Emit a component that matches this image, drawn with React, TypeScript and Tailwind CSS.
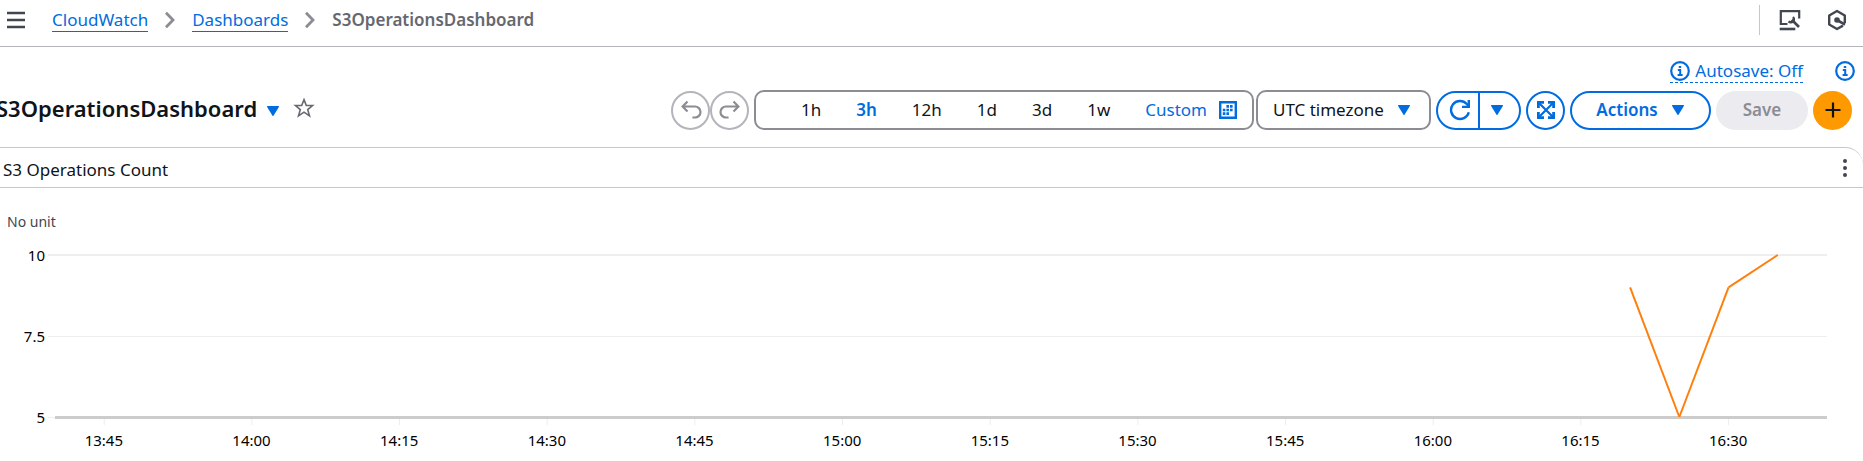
import React from "react";

const ranges = ["1h", "3h", "12h", "1d", "3d", "1w"];
const times = [
  "13:45", "14:00", "14:15", "14:30", "14:45", "15:00",
  "15:15", "15:30", "15:45", "16:00", "16:15", "16:30",
];

// Minutes after 13:40 and the operation count; the time axis spans 180 minutes.
const points = [
  { minute: 160, count: 9 },
  { minute: 165, count: 5 },
  { minute: 170, count: 9 },
  { minute: 175, count: 10 },
];

const plotHeight = 162;
const toX = (minute: number) => `${(minute / 180) * 100}%`;
const toY = (count: number) => 1 + ((10 - count) / 5) * plotHeight;

function Triangle({ className = "" }: { className?: string }) {
  return (
    <svg viewBox="0 0 14 12" className={`h-3 w-3.5 shrink-0 ${className}`} fill="currentColor" aria-hidden="true">
      <path d="M1.6 1h10.8a.6.6 0 0 1 .5.9l-5.4 8.8a.6.6 0 0 1-1 0L1.1 1.9a.6.6 0 0 1 .5-.9z" />
    </svg>
  );
}

function Chevron() {
  return (
    <svg viewBox="0 0 12 18" className="h-[18px] w-3 shrink-0" fill="none" stroke="#8c8c94" strokeWidth="2.8" aria-hidden="true">
      <path d="M2 1.8 9 9l-7 7.2" />
    </svg>
  );
}

function InfoIcon() {
  return (
    <svg viewBox="0 0 20 20" className="size-5 shrink-0" fill="none" stroke="currentColor" strokeWidth="2.2" aria-hidden="true">
      <circle cx="10" cy="10" r="8.8" />
      <path d="M7.8 9h2.4v5M7.6 14.1h5M8.8 6h2.4" strokeWidth="2" />
    </svg>
  );
}

function UndoIcon({ flip = false }: { flip?: boolean }) {
  return (
    <svg viewBox="0 0 22 22" className={flip ? "size-[22px] -scale-x-100" : "size-[22px]"} fill="none" stroke="#8c8c94" strokeWidth="2.2" aria-hidden="true">
      <path d="M7.5 2.5 2.6 7.5l4.9 5M2.8 7.5H15a5.4 5.4 0 0 1 0 11h-2.6" />
    </svg>
  );
}

const round = "flex size-[39px] shrink-0 items-center justify-center rounded-full";

export default function App() {
  return (
    <div className="w-full overflow-hidden bg-white font-['Noto_Sans','Open_Sans',sans-serif] text-[17px] leading-6 text-[#0f141a]">
      <header className="flex h-[47px] items-center border-b border-[#b4b4bb] pb-1.5 pl-[7px] pr-4">
        <button aria-label="Open navigation" className="text-[#424650]">
          <svg viewBox="0 0 18 18" className="size-[18px]" stroke="currentColor" strokeWidth="2.4" aria-hidden="true">
            <path d="M0 2h18M0 9h18M0 16h18" />
          </svg>
        </button>
        <nav aria-label="Breadcrumbs" className="ml-[27px] flex items-center gap-4">
          <a href="#cloudwatch" className="border-b border-[#006ce0] leading-[22px] text-[#006ce0]">CloudWatch</a>
          <Chevron />
          <a href="#dashboards" className="border-b border-[#006ce0] leading-[22px] text-[#006ce0]">Dashboards</a>
          <Chevron />
          <span className="font-semibold leading-[22px] text-[#656871]">S3OperationsDashboard</span>
        </nav>
        <div className="ml-auto flex items-center">
          <div className="h-[30px] w-px bg-[#c6c6cd]" />
          <button aria-label="Cloud shell tools" className="ml-[19px] text-[#424650]">
            <svg viewBox="0 0 22 22" className="size-[22px]" fill="none" stroke="currentColor" strokeWidth="2.2" aria-hidden="true">
              <path d="M8.5 15H1.8V2.2h18.4v7.3" />
              <path d="M.7 20h15.6" strokeWidth="2.6" />
              <path d="m13.5 11.5 6.5 6.5" strokeWidth="2.6" />
              <path d="M14 8a3.1 3.1 0 0 1-4.4 4.4" strokeWidth="2.4" />
              <path d="m12.8 10.8 1.6 1.6" strokeWidth="3" />
            </svg>
          </button>
          <button aria-label="Amazon Q" className="ml-[26px] text-[#424650]">
            <svg viewBox="0 0 20 22" className="h-[22px] w-5" fill="none" stroke="currentColor" strokeWidth="2.4" aria-hidden="true">
              <path d="M17.8 14V6.5L10 2 2.2 6.5v9L10 20l6-3.4" strokeLinejoin="round" />
              <circle cx="10" cy="11" r="2.8" fill="currentColor" stroke="none" />
              <path d="m10 11 8 4.6" strokeWidth="2.6" />
            </svg>
          </button>
        </div>
      </header>

      <main>
        <div className="flex h-[43px] items-end justify-end gap-8 pb-[7px] pr-2 text-[#006ce0]">
          <button className="flex items-center gap-[5px] border-b border-dashed border-[#006ce0] leading-[22px]">
            <InfoIcon />
            Autosave: Off
          </button>
          <button aria-label="Dashboard information" className="pb-0.5"><InfoIcon /></button>
        </div>

        <div className="flex items-center gap-[5px] pr-[11px]">
          <h1 className="-ml-1 pb-1 text-[22px] font-semibold leading-8">S3OperationsDashboard</h1>
          <button aria-label="Switch dashboard" className="ml-1 pt-0.5 text-[#006ce0]"><Triangle /></button>
          <button aria-label="Add to favorites" className="ml-2 pb-1">
            <svg viewBox="0 0 22 22" className="size-[22px]" fill="none" stroke="#656871" strokeWidth="1.6" aria-hidden="true">
              <path d="m11 2.6 2.3 5.9h6.2l-4.8 4.1 1.8 6.2-5.5-3.6-5.5 3.6 1.8-6.2-4.8-4.1h6.2z" />
            </svg>
          </button>

          <div className="ml-auto flex">
            <button aria-label="Undo" disabled className={`${round} border-2 border-[#b4b4bb]`}><UndoIcon /></button>
            <button aria-label="Redo" disabled className={`${round} border-2 border-[#b4b4bb]`}><UndoIcon flip /></button>
          </div>
          <div className="flex gap-0.5">
            <div className="flex h-10 items-center gap-[35px] rounded-[10px] border-2 border-[#8c8c94] pl-[45px] pr-[15px]">
              {ranges.map((range) => (
                <button key={range} className={range === "3h" ? "font-semibold text-[#006ce0]" : ""}>{range}</button>
              ))}
              <button className="flex items-center gap-3 text-[#006ce0]">
                Custom
                <svg viewBox="0 0 18 18" className="size-[18px]" aria-hidden="true">
                  <path d="M1.2 1.2h15.6v15.6H1.2z" fill="none" stroke="currentColor" strokeWidth="2.4" />
                  <path d="M7.4 5.4h7M3.8 9h10.6M3.8 12.6h6.6" stroke="currentColor" strokeWidth="2.6" strokeDasharray="2.6 1" />
                </svg>
              </button>
            </div>
            <div className="relative">
              <select aria-label="Timezone" className="h-10 w-[175px] appearance-none rounded-[10px] border-2 border-[#8c8c94] bg-white pl-[15px] pr-9">
                <option>UTC timezone</option>
              </select>
              <Triangle className="pointer-events-none absolute right-5 top-3.5 text-[#006ce0]" />
            </div>
          </div>
          <div className="flex h-[39px] w-[85px] rounded-full border-2 border-[#006ce0] text-[#006ce0]">
            <button aria-label="Refresh" className="flex w-[42px] items-center justify-center border-r-2 border-[#006ce0] pl-1">
              <svg viewBox="0 0 22 22" className="size-[22px]" fill="none" stroke="currentColor" strokeWidth="2.4" aria-hidden="true">
                <path d="M19.8 13.2a9 9 0 1 1-2-8.2l2.2 2.6" />
                <path d="M19.8 1v6.9H13" />
              </svg>
            </button>
            <button aria-label="Refresh options" className="flex flex-1 items-center pl-2.5"><Triangle /></button>
          </div>
          <button aria-label="Full screen" className={`${round} border-2 border-[#006ce0] text-[#006ce0]`}>
            <svg viewBox="0 0 20 20" className="size-5" fill="none" stroke="currentColor" strokeWidth="2.4" aria-hidden="true">
              <path d="m3 3 14 14M17 3 3 17" strokeWidth="2.2" />
              <path d="M8 2.4H2.4V8M12 2.4h5.6V8M8 17.6H2.4V12M12 17.6h5.6V12" strokeWidth="2.8" />
            </svg>
          </button>
          <button className="flex h-[39px] w-[141px] items-center justify-center gap-[13px] rounded-full border-2 border-[#006ce0] font-semibold text-[#006ce0]">
            Actions
            <Triangle />
          </button>
          <button disabled className="h-[39px] w-[92px] rounded-full bg-[#ebebf0] font-semibold text-[#8c8c94]">Save</button>
          <button aria-label="Add widget" className={`${round} bg-[#ff9900]`}>
            <svg viewBox="0 0 16 16" className="size-4" stroke="currentColor" strokeWidth="2.2" aria-hidden="true">
              <path d="M8 .5v15M.5 8h15" />
            </svg>
          </button>
        </div>

        <section className="mt-[17px] rounded-tr-[18px] border-t border-[#c6c6cd]">
          <div className="flex h-10 items-center justify-between border-b border-[#c6c6cd] pl-[3px] pr-4">
            <h2 className="pt-1">S3 Operations Count</h2>
            <button aria-label="Widget actions">
              <svg viewBox="0 0 4 18" className="h-[18px] w-1" fill="#424650" aria-hidden="true">
                <circle cx="2" cy="2" r="2" />
                <circle cx="2" cy="9" r="2" />
                <circle cx="2" cy="16" r="2" />
              </svg>
            </button>
          </div>

          <div className="pt-6 text-[15px] leading-5 text-black">
            <div className="pl-[7px] text-sm leading-5 text-[#424650]">No unit</div>
            <div className="mt-[13px] flex pr-9">
              <div className="flex h-[182px] w-[45px] shrink-0 flex-col justify-between text-right">
                <span>10</span>
                <span>7.5</span>
                <span>5</span>
              </div>
              <div className="ml-[3px] flex-1 pt-[9px]">
                <svg className="block h-[171px] w-full" role="img" aria-label="S3 operations count over time">
                  <line x1="0" x2="100%" y1="1" y2="1" stroke="#eeeeee" strokeWidth="2" />
                  <line x1="0" x2="100%" y1="82.5" y2="82.5" stroke="#eeeeee" />
                  <line x1="0" x2="7" y1="163.5" y2="163.5" stroke="#eeeeee" />
                  <svg x="7" className="overflow-visible" style={{ width: "calc(100% - 7px)" }}>
                    {times.map((time, i) => (
                      <line key={time} x1={toX(5 + i * 15)} x2={toX(5 + i * 15)} y1="165" y2="171" stroke="#eeeeee" />
                    ))}
                    <line x1="0" x2="100%" y1="163.5" y2="163.5" stroke="#cccccc" strokeWidth="3" />
                    {points.slice(1).map((point, i) => (
                      <line
                        key={point.minute}
                        x1={toX(points[i].minute)}
                        y1={toY(points[i].count)}
                        x2={toX(point.minute)}
                        y2={toY(point.count)}
                        stroke="#ff7f0e"
                        strokeWidth="2"
                      />
                    ))}
                  </svg>
                </svg>
              </div>
            </div>
            <div className="mt-[3px] grid grid-cols-12 pb-2.5 pl-[30px] pr-[61px] text-center">
              {times.map((time) => (
                <span key={time}>{time}</span>
              ))}
            </div>
          </div>
        </section>
      </main>
    </div>
  );
}
